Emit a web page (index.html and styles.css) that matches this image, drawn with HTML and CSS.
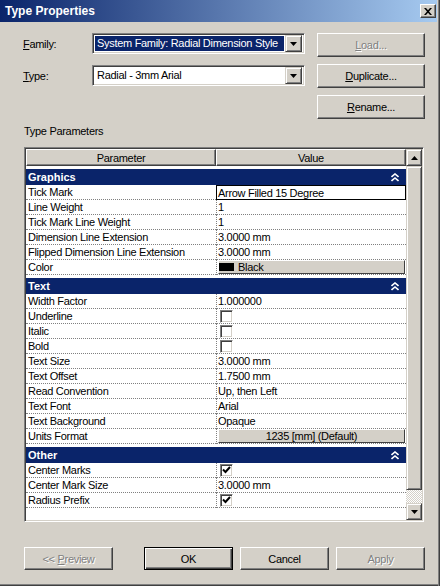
FILE: index.html
```html
<!DOCTYPE html>
<html lang="en">
  <head>
    <meta charset="UTF-8" />
    <title>Type Properties</title>
    <link rel="stylesheet" href="styles.css">
  </head>
  <body>
    <div class="window">
      <div class="titlebar">
        <span>Type Properties</span>
        <span class="close">
          <svg width="8" height="7" viewBox="0 0 8 7"><path d="M0 0L2 0L4 2.3L6 0L8 0L5 3.5L8 7L6 7L4 4.7L2 7L0 7L3 3.5Z" fill="#000"/></svg>
        </span>
      </div>

      <div class="content">
        <div class="top">
          <div class="fields">
            <div class="field">
              <span class="label"><u>F</u>amily:</span>
              <div class="combo">
                <span class="combo-text selected">System Family: Radial Dimension Style</span>
                <span class="drop"><svg width="7" height="4" viewBox="0 0 7 4"><path d="M0 0H7L3.5 4Z" fill="#000"/></svg></span>
              </div>
            </div>
            <div class="field">
              <span class="label"><u>T</u>ype:</span>
              <div class="combo">
                <span class="combo-text">Radial - 3mm Arial</span>
                <span class="drop"><svg width="7" height="4" viewBox="0 0 7 4"><path d="M0 0H7L3.5 4Z" fill="#000"/></svg></span>
              </div>
            </div>
          </div>
          <div class="actions">
            <div class="btn disabled"><span><u>L</u>oad...</span></div>
            <div class="btn"><span><u>D</u>uplicate...</span></div>
            <div class="btn"><span><u>R</u>ename...</span></div>
          </div>
        </div>

        <div class="group-label">Type Parameters</div>

        <div class="grid">
          <div class="grid-main">
            <div class="head">
              <div class="head-cell param">Parameter</div>
              <div class="head-cell">Value</div>
            </div>

            <div class="band"><span>Graphics</span><svg class="chev" width="8" height="9" viewBox="0 0 8 9"><path d="M0.5 4L4 1L7.5 4M0.5 8L4 5L7.5 8" stroke="#fff" stroke-width="1.6" fill="none"/></svg></div>
            <div class="row"><div class="cell">Tick Mark</div><div class="cell value editing">Arrow Filled 15 Degree</div></div>
            <div class="row"><div class="cell">Line Weight</div><div class="cell value">1</div></div>
            <div class="row"><div class="cell">Tick Mark Line Weight</div><div class="cell value">1</div></div>
            <div class="row"><div class="cell">Dimension Line Extension</div><div class="cell value">3.0000 mm</div></div>
            <div class="row"><div class="cell">Flipped Dimension Line Extension</div><div class="cell value">3.0000 mm</div></div>
            <div class="row"><div class="cell">Color</div><div class="cell value"><span class="cell-btn"><span class="swatch"></span>Black</span></div></div>

            <div class="band"><span>Text</span><svg class="chev" width="8" height="9" viewBox="0 0 8 9"><path d="M0.5 4L4 1L7.5 4M0.5 8L4 5L7.5 8" stroke="#fff" stroke-width="1.6" fill="none"/></svg></div>
            <div class="row"><div class="cell">Width Factor</div><div class="cell value">1.000000</div></div>
            <div class="row"><div class="cell">Underline</div><div class="cell value"><span class="check"></span></div></div>
            <div class="row"><div class="cell">Italic</div><div class="cell value"><span class="check"></span></div></div>
            <div class="row"><div class="cell">Bold</div><div class="cell value"><span class="check"></span></div></div>
            <div class="row"><div class="cell">Text Size</div><div class="cell value">3.0000 mm</div></div>
            <div class="row"><div class="cell">Text Offset</div><div class="cell value">1.7500 mm</div></div>
            <div class="row"><div class="cell">Read Convention</div><div class="cell value">Up, then Left</div></div>
            <div class="row"><div class="cell">Text Font</div><div class="cell value">Arial</div></div>
            <div class="row"><div class="cell">Text Background</div><div class="cell value">Opaque</div></div>
            <div class="row"><div class="cell">Units Format</div><div class="cell value"><span class="cell-btn center">1235 [mm] (Default)</span></div></div>

            <div class="band"><span>Other</span><svg class="chev" width="8" height="9" viewBox="0 0 8 9"><path d="M0.5 4L4 1L7.5 4M0.5 8L4 5L7.5 8" stroke="#fff" stroke-width="1.6" fill="none"/></svg></div>
            <div class="row"><div class="cell">Center Marks</div><div class="cell value"><span class="check"><svg width="9" height="8" viewBox="0 0 9 8"><path d="M1 3.5L3.5 6L8 1" stroke="#000" stroke-width="2" fill="none"/></svg></span></div></div>
            <div class="row"><div class="cell">Center Mark Size</div><div class="cell value">3.0000 mm</div></div>
            <div class="row"><div class="cell">Radius Prefix</div><div class="cell value"><span class="check"><svg width="9" height="8" viewBox="0 0 9 8"><path d="M1 3.5L3.5 6L8 1" stroke="#000" stroke-width="2" fill="none"/></svg></span></div></div>
          </div>

          <div class="scrollbar">
            <div class="sb-btn"><svg width="7" height="4" viewBox="0 0 7 4"><path d="M0 4H7L3.5 0Z" fill="#000"/></svg></div>
            <div class="sb-thumb"></div>
            <div class="sb-track"></div>
            <div class="sb-btn"><svg width="7" height="4" viewBox="0 0 7 4"><path d="M0 0H7L3.5 4Z" fill="#000"/></svg></div>
          </div>
        </div>

        <div class="footer">
          <div class="btn wide disabled"><span>&lt;&lt; <u>P</u>review</span></div>
          <div class="footer-right">
            <div class="btn wide default">OK</div>
            <div class="btn wide">Cancel</div>
            <div class="btn wide disabled">Apply</div>
          </div>
        </div>
      </div>
    </div>
  </body>
</html>
```

FILE: styles.css
```css
body {
  margin: 0;
  background-color: #d4d0c8;
  font-family: "Liberation Sans", Arial, sans-serif;
  font-size: 11px;
  letter-spacing: -0.3px;
  color: #000;
}

.window {
  width: 440px;
  height: 586px;
  box-sizing: border-box;
  background-color: #d4d0c8;
  padding-right: 3px;
  box-shadow: inset -1px 0 #404040, inset -2px 0 #808080, inset 0 -1px #404040, inset 0 -2px #808080;
}

.titlebar {
  height: 22px;
  display: flex;
  align-items: center;
  justify-content: space-between;
  padding: 0 1px 0 5px;
  background: linear-gradient(to right, #0a246a, #a6caf0);
  color: #fff;
  font-weight: bold;
  font-size: 12px;
  letter-spacing: 0;
}

.close {
  width: 16px;
  height: 14px;
  display: flex;
  align-items: center;
  justify-content: center;
  box-sizing: border-box;
  background-color: #d4d0c8;
  border: 1px solid;
  border-color: #fff #404040 #404040 #fff;
  box-shadow: inset -1px -1px #808080;
}

.content {
  padding: 11px 0 0 24px;
}

.top {
  display: flex;
}

.fields {
  display: flex;
  flex-direction: column;
  gap: 11px;
}

.field {
  display: flex;
  align-items: center;
  height: 21px;
}

.label {
  width: 69px;
  margin-left: -1px;
}

.combo {
  width: 213px;
  height: 21px;
  box-sizing: border-box;
  display: flex;
  align-items: center;
  padding: 2px;
  background-color: #fff;
  border: 1px solid;
  border-color: #808080 #fff #fff #808080;
  box-shadow: inset 1px 1px #404040, inset -1px -1px #d4d0c8;
}

.combo-text {
  flex: 1;
  height: 15px;
  line-height: 15px;
  padding-left: 2px;
  margin-right: 1px;
  white-space: nowrap;
  overflow: hidden;
}

.combo-text.selected {
  background-color: #0a246a;
  color: #fff;
}

.drop {
  width: 17px;
  height: 17px;
  box-sizing: border-box;
  display: flex;
  align-items: center;
  justify-content: center;
  background-color: #d4d0c8;
  border: 1px solid;
  border-color: #d4d0c8 #404040 #404040 #d4d0c8;
  box-shadow: inset 1px 1px #fff, inset -1px -1px #808080;
}

.actions {
  display: flex;
  flex-direction: column;
  gap: 7px;
  margin-left: 12px;
}

.btn {
  width: 108px;
  height: 24px;
  box-sizing: border-box;
  display: flex;
  align-items: center;
  justify-content: center;
  background-color: #d4d0c8;
  border: 1px solid;
  border-color: #fff #404040 #404040 #fff;
  box-shadow: inset -1px -1px #808080, inset 1px 1px #d4d0c8;
}

.btn.wide {
  width: 89px;
  height: 23px;
}

.btn.disabled {
  color: #808080;
  text-shadow: 1px 1px #fff;
}

.btn.default {
  border: 1px solid #000;
  box-shadow: inset 1px 1px #fff, inset -1px -1px #404040, inset -2px -2px #808080;
}

.group-label {
  margin-top: 6px;
  line-height: 13px;
}

.grid {
  width: 400px;
  height: 375px;
  box-sizing: border-box;
  margin-top: 9px;
  display: flex;
  background-color: #fff;
  border: 1px solid;
  border-color: #808080 #fff #fff #808080;
  box-shadow: inset 1px 1px #404040, inset -1px -1px #d4d0c8;
  padding: 1px;
}

.grid-main {
  width: 380px;
}

.head {
  display: flex;
  height: 17px;
}

.head-cell {
  width: 190px;
  box-sizing: border-box;
  display: flex;
  align-items: center;
  justify-content: center;
  background-color: #d4d0c8;
  border: 1px solid;
  border-color: #fff #404040 #404040 #fff;
  box-shadow: inset -1px -1px #808080;
}

.band {
  height: 16px;
  margin-top: 3px;
  display: flex;
  align-items: center;
  justify-content: space-between;
  padding: 0 7px 0 2px;
  background-color: #0a246a;
  color: #fff;
  font-weight: bold;
  letter-spacing: 0;
}

.chev {
  display: block;
}

.row {
  display: flex;
  height: 15px;
}

.cell {
  width: 190px;
  box-sizing: border-box;
  height: 15px;
  line-height: 14px;
  padding-left: 2px;
  border-bottom: 1px dotted #808080;
  white-space: nowrap;
  overflow: hidden;
}

.cell.value {
  padding-left: 1px;
  border-left: 1px dotted #808080;
  display: flex;
  align-items: center;
}

.cell.editing {
  border: 1px solid #000;
  padding-left: 1px;
}

.cell-btn {
  flex: 1;
  height: 14px;
  box-sizing: border-box;
  display: flex;
  align-items: center;
  background-color: #d4d0c8;
  border: 1px solid;
  border-color: #fff #404040 #404040 #fff;
  margin-right: 1px;
}

.cell-btn.center {
  justify-content: center;
}

.swatch {
  width: 15px;
  height: 8px;
  background-color: #000;
  margin: 0 4px 0 0;
}

.check {
  width: 13px;
  height: 13px;
  box-sizing: border-box;
  margin-left: 2px;
  display: flex;
  align-items: center;
  justify-content: center;
  background-color: #fff;
  border: 1px solid;
  border-color: #808080 #fff #fff #808080;
  box-shadow: inset 1px 1px #404040, inset -1px -1px #d4d0c8;
}

.scrollbar {
  width: 16px;
  display: flex;
  flex-direction: column;
}

.sb-btn {
  height: 17px;
  box-sizing: border-box;
  display: flex;
  align-items: center;
  justify-content: center;
  background-color: #d4d0c8;
  border: 1px solid;
  border-color: #d4d0c8 #404040 #404040 #d4d0c8;
  box-shadow: inset 1px 1px #fff, inset -1px -1px #808080;
}

.sb-thumb {
  height: 324px;
  box-sizing: border-box;
  background-color: #d4d0c8;
  border: 1px solid;
  border-color: #d4d0c8 #404040 #404040 #d4d0c8;
  box-shadow: inset 1px 1px #fff, inset -1px -1px #808080;
}

.sb-track {
  flex: 1;
  background-color: #e8e6e2;
  background-image: repeating-conic-gradient(#fff 0 25%, #d4d0c8 0 50%);
  background-size: 2px 2px;
}

.footer {
  display: flex;
  margin-top: 25px;
  width: 401px;
  justify-content: space-between;
}

.footer-right {
  display: flex;
  gap: 7px;
}
```
